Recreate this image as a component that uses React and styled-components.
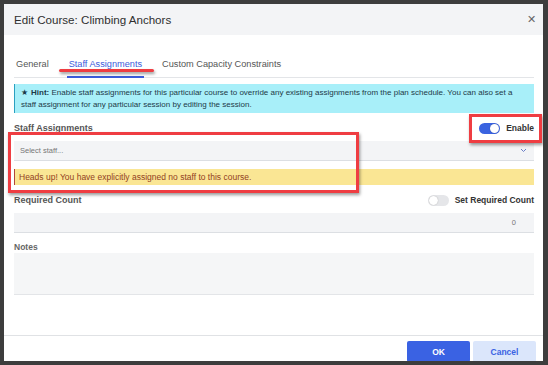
import React from 'react';
import styled, {createGlobalStyle} from 'styled-components';

const GlobalStyle = createGlobalStyle`
  html, body {
    margin: 0;
    padding: 0;
    background: #3d3d3d;
  }
  body {
    font-family: "Liberation Sans", Arial, sans-serif;
  }
`

const Page = styled.div`
  width: 548px;
  height: 365px;
  padding: 4px 5px 4px 4px;
  box-sizing: border-box;
  overflow: hidden;
`

const Modal = styled.div`
  position: relative;
  width: 539px;
  height: 357px;
  background: #fff;
  overflow: hidden;
  display: flex;
  flex-direction: column;
`

const Header = styled.div`
  height: 31px;
  flex-shrink: 0;
  background: #f3f4f6;
  display: flex;
  align-items: center;
  justify-content: space-between;
  padding: 0 7px 0 10px;
`

const Title = styled.h1`
  margin: 0;
  font-size: 11.6px;
  font-weight: normal;
  color: #2f2f2f;
`

const Close = styled.span`
  font-size: 11px;
  color: #666;
  line-height: 1;
`

const Body = styled.div`
  flex: 1;
  padding: 0 9px 0 10px;
  display: flex;
  flex-direction: column;
`

const TabBar = styled.div`
  display: flex;
  margin-top: 16px;
  border-bottom: 1px solid #e3e5e8;
`

const Tab = styled.div`
  padding: 7px 2px 6px;
  margin-right: 16px;
  font-size: 9.2px;
  line-height: 12px;
  color: ${p => p.$active ? '#3b5bdb' : '#555'};
  border-bottom: 2px solid ${p => p.$active ? '#3b5bdb' : 'transparent'};
  margin-bottom: -1px;
`

const Hint = styled.div`
  margin-top: 6px;
  background: #a8eff9;
  border-left: 1.5px solid #2aa0c0;
  padding: 3px 6px;
  font-size: 8px;
  line-height: 11.5px;
  color: #1d3a48;

  b {
    font-weight: bold;
  }
`

const Star = styled.span`
  margin-right: 3px;
`

const FieldRow = styled.div`
  display: flex;
  align-items: center;
  justify-content: space-between;
  height: 12px;
  margin-top: 9px;
`

const Label = styled.span`
  font-size: ${p => p.$small ? 8.5 : 9}px;
  font-weight: bold;
  color: ${p => p.$small ? '#666' : '#555'};
`

const SwitchWrap = styled.label`
  display: flex;
  align-items: center;
  gap: 6px;
  font-size: 8.5px;
  font-weight: bold;
  color: #333;
`

const Track = styled.span`
  position: relative;
  width: 21px;
  height: 11px;
  border-radius: 6px;
  background: ${p => p.$on ? '#3a63e0' : '#e5e6e9'};
`

const Knob = styled.span`
  position: absolute;
  top: 1px;
  left: ${p => p.$on ? '11px' : '1px'};
  width: 9px;
  height: 9px;
  border-radius: 50%;
  background: #fff;
  box-shadow: 0 0 1px rgba(0, 0, 0, 0.35);
`

const Select = styled.div`
  margin-top: 7px;
  height: 20px;
  box-sizing: border-box;
  background: #f3f4f6;
  border-bottom: 1px solid #dcdfe3;
  display: flex;
  align-items: center;
  justify-content: space-between;
  padding: 0 7px 0 6px;
  font-size: 7.5px;
  color: #777;
`

const Warning = styled.div`
  margin-top: 8px;
  height: 16px;
  box-sizing: border-box;
  background: #fae694;
  border-left: 1.5px solid #b0463a;
  display: flex;
  align-items: center;
  padding-left: 4px;
  font-size: 8.5px;
  color: #924122;
`

const NumberInput = styled.div`
  margin-top: 7px;
  height: 20px;
  box-sizing: border-box;
  background: #f3f4f6;
  border-bottom: 1px solid #dcdfe3;
  display: flex;
  align-items: center;
  justify-content: flex-end;
  padding-right: 18px;
  font-size: 7.5px;
  color: #777;
`

const NotesLabel = styled.div`
  margin-top: 8px;
  height: 12px;
  display: flex;
  align-items: center;
`

const TextArea = styled.div`
  height: 42px;
  box-sizing: border-box;
  background: #f5f6f7;
  border-bottom: 1px solid #e3e5e8;
`

const Footer = styled.div`
  flex-shrink: 0;
  box-sizing: border-box;
  height: 26px;
  border-top: 1px solid #e0e2e5;
  padding: 5px 7px 0;
  display: flex;
  justify-content: flex-end;
  gap: 3px;
`

const Button = styled.button`
  flex-shrink: 0;
  width: 63px;
  height: 21px;
  border: none;
  border-radius: 2px;
  font-family: inherit;
  font-size: 8.5px;
  font-weight: bold;
  background: ${p => p.$primary ? '#3a62e3' : '#dbe6fb'};
  color: ${p => p.$primary ? '#fff' : '#3a62e3'};
`

const Mark = styled.div`
  position: absolute;
  box-sizing: border-box;
  border: 3px solid #ef3d42;
  box-shadow: 1px 2px 3px rgba(0, 0, 0, 0.4);
`

const Stroke = styled.div`
  position: absolute;
  height: 3px;
  border-radius: 2px;
  background: #ef3d42;
  box-shadow: 1px 2px 3px rgba(0, 0, 0, 0.4);
`

const Switch = ({on, children}) => (
    <SwitchWrap>
        <Track $on={on}><Knob $on={on}/></Track>
        {children}
    </SwitchWrap>
);

const Chevron = () => (
    <svg width="7" height="5" viewBox="0 0 7 5">
        <polyline points="1,1 3.5,3.5 6,1" fill="none" stroke="#6a7fc8" strokeWidth="1"/>
    </svg>
);

const App = () => {

    return (
        <Page>
            <GlobalStyle/>
            <Modal>
                <Header>
                    <Title>Edit Course: Climbing Anchors</Title>
                    <Close>✕</Close>
                </Header>
                <Body>
                    <TabBar>
                        <Tab>General</Tab>
                        <Tab $active>Staff Assignments</Tab>
                        <Tab>Custom Capacity Constraints</Tab>
                    </TabBar>
                    <Hint>
                        <Star>★</Star><b>Hint:</b> Enable staff assignments for this particular course to override any existing assignments from the plan schedule. You can also set a<br/>
                        staff assignment for any particular session by editing the session.
                    </Hint>
                    <FieldRow>
                        <Label>Staff Assignments</Label>
                        <Switch on>Enable</Switch>
                    </FieldRow>
                    <Select>
                        <span>Select staff...</span>
                        <Chevron/>
                    </Select>
                    <Warning>Heads up! You have explicitly assigned no staff to this course.</Warning>
                    <FieldRow>
                        <Label>Required Count</Label>
                        <Switch>Set Required Count</Switch>
                    </FieldRow>
                    <NumberInput>0</NumberInput>
                    <NotesLabel><Label $small>Notes</Label></NotesLabel>
                    <TextArea/>
                </Body>
                <Footer>
                    <Button $primary>OK</Button>
                    <Button>Cancel</Button>
                </Footer>
                <Stroke style={{left: 55, top: 65, width: 95}}/>
                <Mark style={{left: 465, top: 110, width: 73, height: 29}}/>
                <Mark style={{left: 4, top: 128, width: 351, height: 61}}/>
            </Modal>
        </Page>
    );
};

export default App;
